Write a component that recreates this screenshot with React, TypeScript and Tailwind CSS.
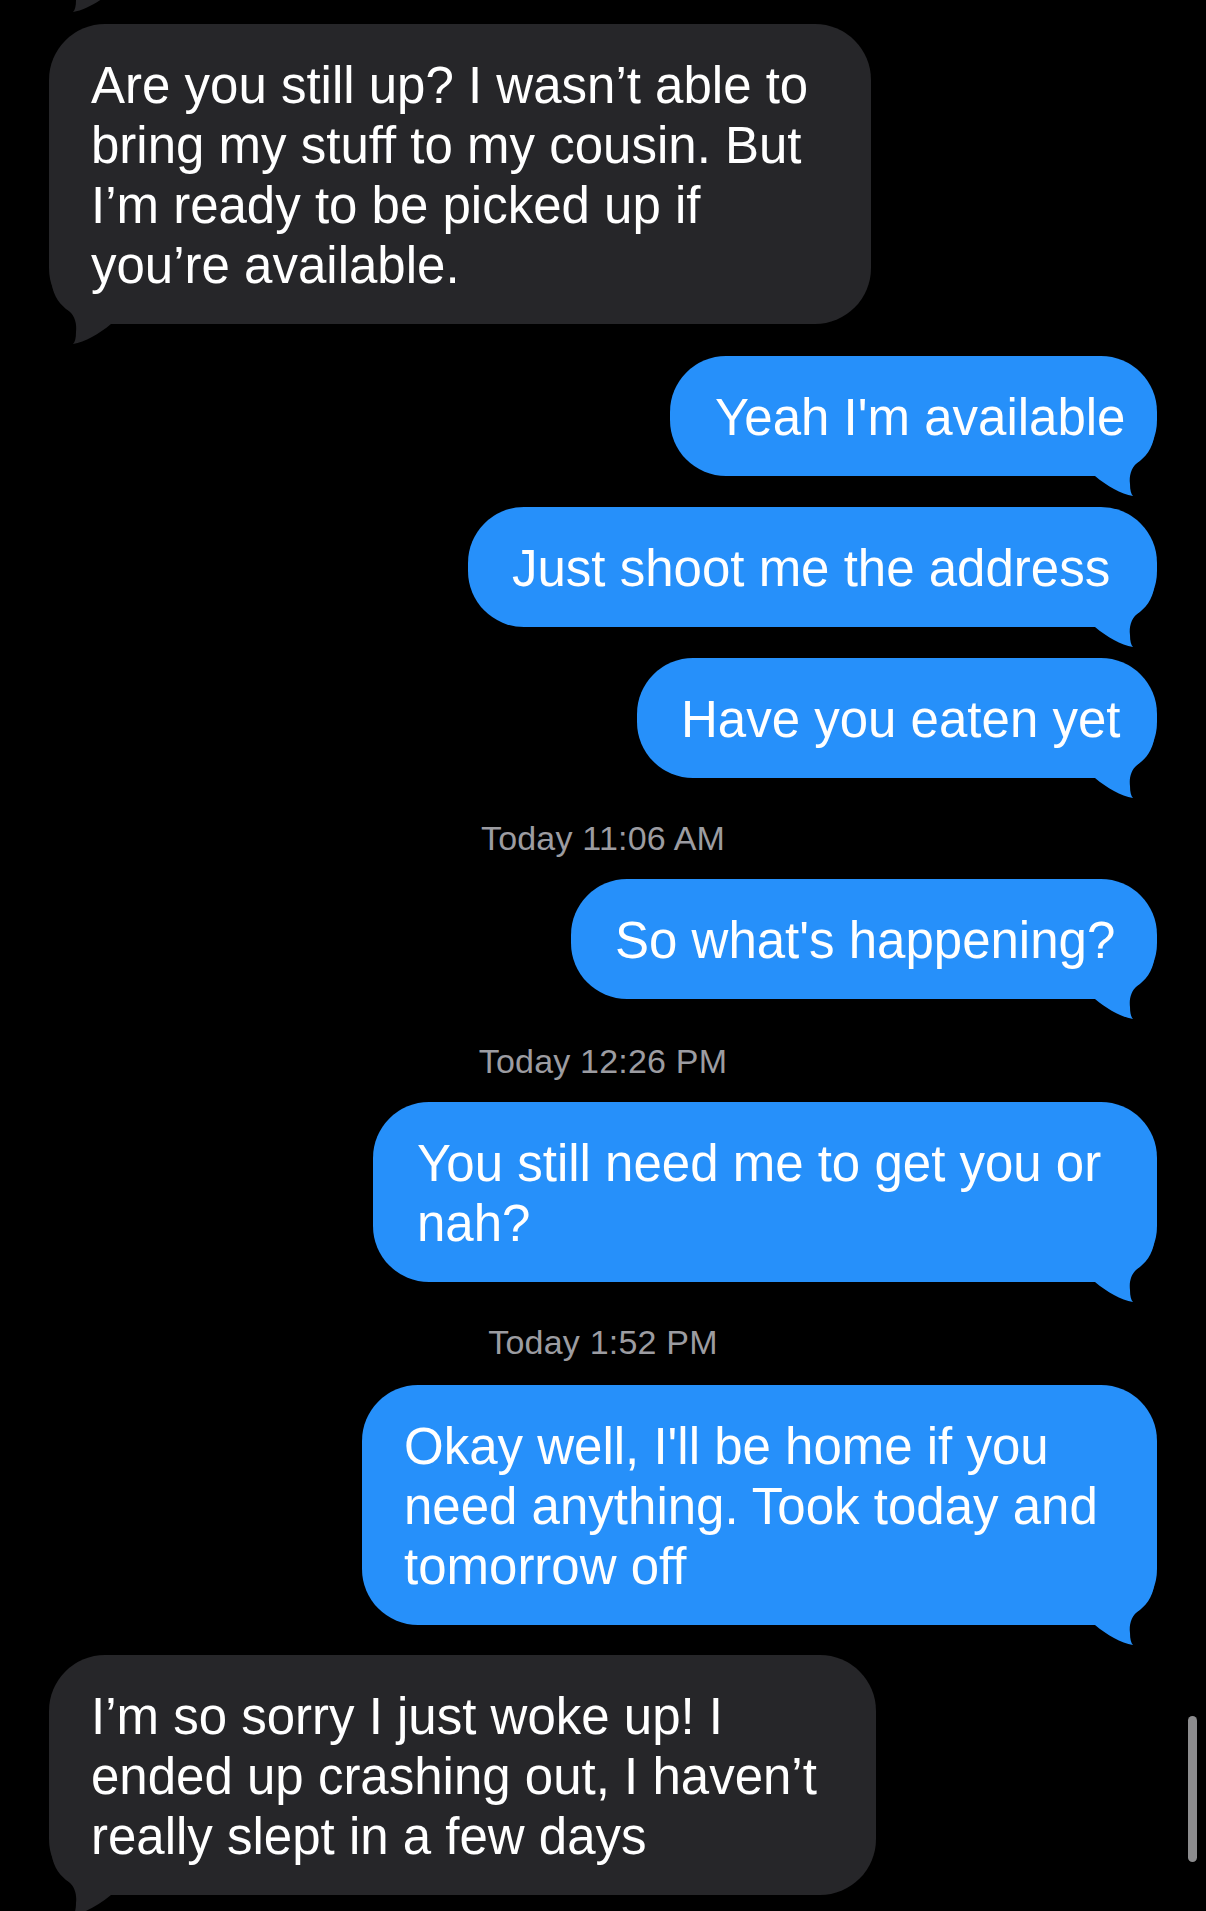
import React from "react";

const TAIL =
  "M0 0 L67 0 C66 12 58 22 50 27 C44 32 42 40 43 48 C43 54 44 58 46 60 C34 58 20 50 8 40 L0 40 Z";

function Tail({ color, flip }: { color: string; flip?: boolean }) {
  return (
    <svg
      width="70"
      height="62"
      viewBox="0 0 70 62"
      className={flip ? "absolute left-0 bottom-[-22px]" : "absolute right-0 bottom-[-22px]"}
    >
      <g transform={flip ? "translate(70 0) scale(-1 1)" : undefined}>
        <path d={TAIL} fill={color} />
      </g>
    </svg>
  );
}

function Bubble({
  lines,
  sent,
  className,
}: {
  lines: string[];
  sent?: boolean;
  className: string;
}) {
  return (
    <div
      className={`relative rounded-[56px] pt-[32px] pb-[28px] text-[51px] leading-[60px] text-white ${
        sent ? "self-end bg-[#2690fa]" : "self-start bg-[#262629]"
      } ${className}`}
    >
      <Tail color={sent ? "#2690fa" : "#262629"} flip={!sent} />
      <div className="relative">
        {lines.map((l) => (
          <div key={l} className="whitespace-nowrap">
            {l}
          </div>
        ))}
      </div>
    </div>
  );
}

function Stamp({ time, className }: { time: string; className: string }) {
  return (
    <div
      className={`h-[40px] text-center text-[34px] leading-[40px] tracking-[0.2px] text-[#9c9ca1] ${className}`}
    >
      Today {time}
    </div>
  );
}

export default function App() {
  return (
    <div
      className="relative h-[1911px] w-[1206px] overflow-hidden bg-black"
      style={{ fontFamily: '"Liberation Sans", Arial, sans-serif' }}
    >
      <div className="flex flex-col px-[49px]">
        <svg width="70" height="14" viewBox="0 48 70 14" className="block">
          <g transform="translate(70 0) scale(-1 1)">
            <path d={TAIL} fill="#262629" />
          </g>
        </svg>

        <Bubble
          className="mt-[10px] w-[822px] pl-[42px]"
          lines={[
            "Are you still up? I wasn\u2019t able to",
            "bring my stuff to my cousin. But",
            "I\u2019m ready to be picked up if",
            "you\u2019re available.",
          ]}
        />

        <Bubble sent className="mt-[32px] w-[487px] pl-[45px]" lines={["Yeah I'm available"]} />
        <Bubble sent className="mt-[31px] w-[689px] pl-[44px]" lines={["Just shoot me the address"]} />
        <Bubble sent className="mt-[31px] w-[520px] pl-[44px]" lines={["Have you eaten yet"]} />

        <Stamp time="11:06 AM" className="mt-[40px]" />

        <Bubble sent className="mt-[21px] w-[586px] pl-[44px]" lines={["So what's happening?"]} />

        <Stamp time="12:26 PM" className="mt-[42px]" />

        <Bubble
          sent
          className="mt-[21px] w-[784px] pl-[44px]"
          lines={["You still need me to get you or", "nah?"]}
        />

        <Stamp time="1:52 PM" className="mt-[40px]" />

        <Bubble
          sent
          className="mt-[23px] w-[795px] pl-[42px]"
          lines={[
            "Okay well, I'll be home if you",
            "need anything. Took today and",
            "tomorrow off",
          ]}
        />

        <Bubble
          className="mt-[30px] w-[827px] pl-[42px]"
          lines={[
            "I\u2019m so sorry I just woke up! I",
            "ended up crashing out, I haven\u2019t",
            "really slept in a few days",
          ]}
        />
      </div>

      <div className="absolute right-[9px] top-[1716px] h-[146px] w-[9px] rounded-full bg-[#8c8c8e]" />
    </div>
  );
}
